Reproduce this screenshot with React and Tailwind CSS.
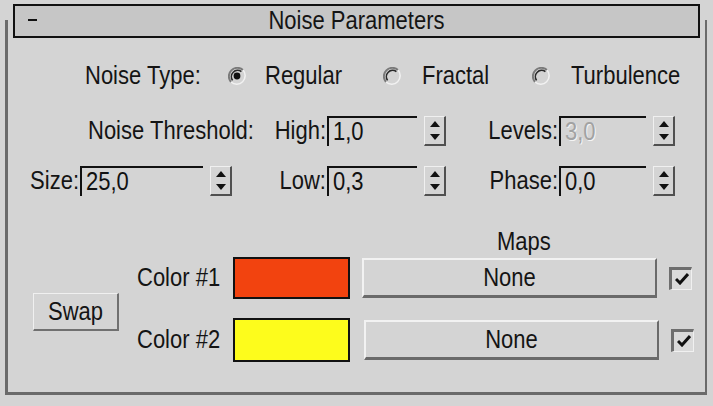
import React from 'react';

const font = { fontFamily: '"Liberation Sans", Arial, sans-serif' };

// old UI font scaled up: a bit taller than Arial
function T({ children, className = '' }) {
  return <span className={`inline-block scale-y-[1.15] ${className}`}>{children}</span>;
}

function Radio({ checked }) {
  return (
    <svg width="18" height="18" viewBox="0 0 18 18" className="shrink-0">
      <path d="M3 15 A8.5 8.5 0 0 1 15 3" stroke="#7a7a7a" strokeWidth="2" fill="none" />
      <path d="M4.6 13.4 A6.3 6.3 0 0 1 13.4 4.6" stroke="#2a2a2a" strokeWidth="1.6" fill="none" />
      <path d="M15 3 A8.5 8.5 0 0 1 3 15" stroke="#f2f2f2" strokeWidth="1.5" fill="none" />
      {checked && <circle cx="9" cy="9" r="3.4" fill="#111" />}
    </svg>
  );
}

function Spinner() {
  return (
    <div className="ml-[7px] w-[22px] h-[30px] flex flex-col border-r-2 border-b-2 border-[#505050] border-l border-l-[#f0f0f0] border-t border-t-[#f0f0f0]">
      <div className="flex-1 flex items-center justify-center">
        <svg width="10" height="6" viewBox="0 0 10 6"><path d="M5 0 L10 6 L0 6 Z" fill="#111" /></svg>
      </div>
      <div className="flex-1 flex items-center justify-center">
        <svg width="10" height="6" viewBox="0 0 10 6"><path d="M0 0 L10 0 L5 6 Z" fill="#111" /></svg>
      </div>
    </div>
  );
}

function Field({ width, value, disabled }) {
  return (
    <div className={`h-[30px] border-t-2 border-l-2 border-[#111] flex items-center pl-[4px] ${width}`}>
      <T className={disabled ? 'text-[#a2a2a2] [text-shadow:1px_1px_0_#f4f4f4]' : 'text-[#111]'}>
        {value}
      </T>
    </div>
  );
}

function CheckBox() {
  return (
    <div className="ml-[12px] w-[23px] h-[23px] border-t-[3px] border-l-[3px] border-[#6e6e6e] border-r border-b border-r-[#f0f0f0] border-b-[#f0f0f0] bg-[#dadada] flex items-center justify-center">
      <svg width="14" height="12" viewBox="0 0 14 12">
        <path d="M1 6 L5 10 L13 1" stroke="#111" strokeWidth="3" fill="none" />
      </svg>
    </div>
  );
}

function MapButton({ offset }) {
  return (
    <div className={`${offset} w-[295px] h-[40px] border-t-2 border-l-2 border-[#f2f2f2] border-r-2 border-b-[3px] border-r-[#6a6a6a] border-b-[#6a6a6a] flex items-center justify-center`}>
      <T>None</T>
    </div>
  );
}

export default function App() {
  return (
    <div className="w-[713px] h-[406px] pt-[20px] bg-[#d4d4d4] overflow-hidden text-[22px] leading-none text-[#141414]" style={font}>
      <div className="flow-root ml-[5px] mr-[6px] h-[375px] border-l-[3px] border-r-2 border-b-[3px] border-[#6a6a6a]">
        {/* Rollout title */}
        <div className="-mt-[16px] mx-[5px] h-[34px] border-2 border-[#111] bg-[#c6c6c6] flex items-center relative">
          <span className="absolute left-[13px] top-[13px] w-[9px] h-[2px] bg-[#111]"></span>
          <div className="flex-1 text-center"><T>Noise Parameters</T></div>
        </div>

        {/* Noise Type */}
        <div className="mt-[23px] h-[30px] flex items-center">
          <T className="ml-[77px] w-[143px]">Noise Type:</T>
          <Radio checked />
          <T className="ml-[19px] w-[118px]">Regular</T>
          <Radio />
          <T className="ml-[21px] w-[110px]">Fractal</T>
          <Radio />
          <T className="ml-[21px]">Turbulence</T>
        </div>

        {/* Threshold / Levels */}
        <div className="mt-[25px] h-[30px] flex items-center">
          <div className="w-[319px] pl-[80px] pr-[1px] flex justify-between">
            <T>Noise Threshold:</T>
            <T>High:</T>
          </div>
          <Field width="w-[90px]" value="1,0" />
          <Spinner />
          <T className="w-[113px] text-right pr-[1px]">Levels:</T>
          <Field width="w-[87px]" value="3,0" disabled />
          <Spinner />
        </div>

        {/* Size / Low / Phase */}
        <div className="mt-[20px] h-[30px] flex items-center">
          <T className="w-[72px] text-right pr-[1px]">Size:</T>
          <Field width="w-[123px]" value="25,0" />
          <Spinner />
          <T className="w-[95px] text-right pr-[1px]">Low:</T>
          <Field width="w-[90px]" value="0,3" />
          <Spinner />
          <T className="w-[113px] text-right pr-[1px]">Phase:</T>
          <Field width="w-[87px]" value="0,0" />
          <Spinner />
        </div>

        <div className="mt-[34px] h-[24px] flex items-center">
          <T className="ml-[489px]">Maps</T>
        </div>

        {/* Colours */}
        <div className="mt-[2px] flex items-center">
          <div className="ml-[25px] mt-[6px] w-[86px] h-[38px] border-t border-l border-[#f0f0f0] border-r-2 border-b-2 border-r-[#707070] border-b-[#707070] flex items-center justify-center">
            <T>Swap</T>
          </div>
          <div className="ml-[18px] flex flex-col gap-[18px]">
            <div className="h-[44px] flex items-center">
              <T className="w-[96px]">Color #1</T>
              <div className="w-[117px] h-[42px] border-2 border-[#111] bg-[#f2430f]"></div>
              <MapButton offset="ml-[12px]" />
              <CheckBox />
            </div>
            <div className="h-[44px] flex items-center">
              <T className="w-[96px]">Color #2</T>
              <div className="w-[117px] h-[44px] border-2 border-[#111] bg-[#fdfc1c]"></div>
              <MapButton offset="ml-[14px]" />
              <CheckBox />
            </div>
          </div>
        </div>
      </div>
    </div>
  );
}
